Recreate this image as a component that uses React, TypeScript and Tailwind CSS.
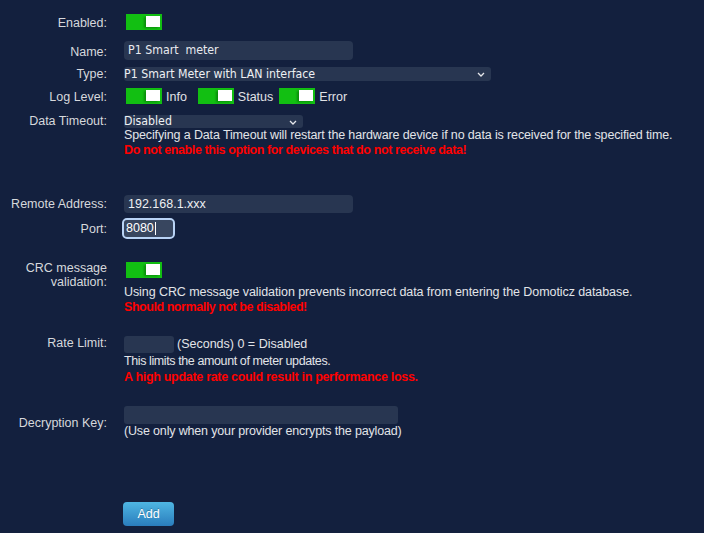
import React from 'react';

function Toggle({ className }: { className?: string }) {
  return (
    <div className={`relative h-4 w-9 bg-[#12bf12] ${className ?? ''}`}>
      <div className="absolute right-[2px] top-[2px] h-[11px] w-[14px] bg-white shadow-[-2px_1px_2px_rgba(0,80,0,0.45)]" />
    </div>
  );
}

function Chevron() {
  return (
    <svg width="8" height="5" viewBox="0 0 8 5" className="absolute right-[6px] top-[5px]">
      <path d="M1 1 L4 4 L7 1" fill="none" stroke="#e5e7eb" strokeWidth="1.3" />
    </svg>
  );
}

function Label({ children, className }: { children: React.ReactNode; className?: string }) {
  return (
    <div className={`w-[107px] shrink-0 text-right text-[12.5px] leading-[14px] text-[#d6d8dc] ${className ?? ''}`}>
      {children}
    </div>
  );
}

const arial = { fontFamily: '"Liberation Sans", Arial, sans-serif' };
const tahoma = { fontFamily: '"DejaVu Sans Condensed", "DejaVu Sans", Verdana, sans-serif' };

export default function App() {
  return (
    <div className="min-h-[533px] w-full bg-[#13203e] pt-[14px] leading-[15px]" style={arial}>
      {/* Enabled */}
      <div className="flex h-4 items-center">
        <Label className="translate-y-px">Enabled:</Label>
        <Toggle className="ml-[19px]" />
      </div>

      {/* Name */}
      <div className="mt-[11px] flex h-[19px] items-center">
        <Label className="translate-y-px">Name:</Label>
        <div
          className="ml-[17px] flex h-[19px] w-[229px] items-center rounded-[4px] bg-[#283651] pl-[4px] text-[12.25px] whitespace-pre text-[#e8eaee]"
          style={tahoma}
        >
          P1 Smart  meter
        </div>
      </div>

      {/* Type */}
      <div className="mt-[7px] flex h-[14px] items-center">
        <Label>Type:</Label>
        <div
          className="relative ml-[17px] flex h-[14px] w-[367px] items-center rounded-[3px] bg-[#283651] text-[12.25px] text-[#eef0f3]"
          style={tahoma}
        >
          P1 Smart Meter with LAN interface
          <Chevron />
        </div>
      </div>

      {/* Log Level */}
      <div className="mt-[7px] flex h-4 items-center">
        <Label className="translate-y-px">Log Level:</Label>
        <div className="ml-[19px] flex items-center text-[12.5px] leading-[14px] text-[#e0e2e6]">
          <Toggle />
          <span className="ml-[4px] translate-y-px">Info</span>
          <Toggle className="ml-[11px]" />
          <span className="ml-[4px] translate-y-px">Status</span>
          <Toggle className="ml-[6px]" />
          <span className="ml-[4px] translate-y-px">Error</span>
        </div>
      </div>

      {/* Data Timeout */}
      <div className="mt-[11px] flex items-start">
        <Label className="-mt-px">Data Timeout:</Label>
        <div className="ml-[17px] flex flex-col">
          <div
            className="relative flex h-[13px] w-[179px] items-center rounded-[3px] bg-[#283651] text-[12.25px] text-[#eef0f3]"
            style={tahoma}
          >
            Disabled
            <Chevron />
          </div>
          <div className="text-[12.5px] leading-[15px] tracking-[-0.13px] text-[#e2e4e8]">
            Specifying a Data Timeout will restart the hardware device if no data is received for the specified time.
          </div>
          <div className="text-[12.5px] font-bold leading-[15px] tracking-[-0.4px] text-[#ff0000]">
            Do not enable this option for devices that do not receive data!
          </div>
        </div>
      </div>

      {/* Remote Address */}
      <div className="mt-[37px] flex h-[18px] items-center">
        <Label>Remote Address:</Label>
        <div className="ml-[17px] flex h-[18px] w-[229px] items-center rounded-[4px] bg-[#283651] pl-[4px] text-[12.5px] text-[#eef0f3]">
          192.168.1.xxx
        </div>
      </div>

      {/* Port */}
      <div className="mt-[7px] flex h-[17px] items-center">
        <Label>Port:</Label>
        <div className="ml-[17px] flex h-[17px] w-[49px] items-center rounded-[3px] bg-[#38465f] pl-[2px] text-[12.5px] text-white outline-2 outline-[#b9d3f5]">
          8080<span className="ml-[1px] h-[13px] w-px bg-white" />
        </div>
      </div>

      {/* CRC */}
      <div className="mt-[25px] flex items-start">
        <Label className="-mt-px">
          CRC message
          <br />
          validation:
        </Label>
        <div className="ml-[17px] flex flex-col">
          <Toggle className="ml-[2px]" />
          <div className="mt-[7px] text-[12.5px] leading-[15px] tracking-[-0.08px] text-[#e2e4e8]">
            Using CRC message validation prevents incorrect data from entering the Domoticz database.
          </div>
          <div className="text-[12.5px] font-bold leading-[15px] tracking-[-0.45px] text-[#ff0000]">
            Should normally not be disabled!
          </div>
        </div>
      </div>

      {/* Rate Limit */}
      <div className="mt-[21px] flex items-start">
        <Label>Rate Limit:</Label>
        <div className="ml-[17px] flex flex-col">
          <div className="flex h-[17px] items-center">
            <div className="h-[17px] w-[50px] rounded-[3px] bg-[#283651]" />
            <span className="ml-[3px] text-[12.5px] text-[#e2e4e8]">(Seconds) 0 = Disabled</span>
          </div>
          <div className="text-[12.5px] leading-[16px] tracking-[-0.4px] text-[#e2e4e8]">
            This limits the amount of meter updates.
          </div>
          <div className="text-[12.5px] font-bold leading-[16px] tracking-[-0.3px] text-[#ff0000]">
            A high update rate could result in performance loss.
          </div>
        </div>
      </div>

      {/* Decryption Key */}
      <div className="mt-[21px] flex items-start">
        <Label className="pt-[10px]">Decryption Key:</Label>
        <div className="ml-[17px] flex flex-col">
          <div className="h-[18px] w-[274px] rounded-[3px] bg-[#283651]" />
          <div className="text-[12.5px] leading-[15px] tracking-[-0.16px] text-[#e2e4e8]">
            (Use only when your provider encrypts the payload)
          </div>
        </div>
      </div>

      {/* Add */}
      <div className="mt-[63px] flex pb-[7px]">
        <button className="ml-[123px] h-6 w-[51px] rounded-[4px] bg-gradient-to-b from-[#4fb6e2] to-[#2a7dbd] text-[12.5px] text-white [text-shadow:0_-1px_0_rgba(0,0,0,0.25)]">
          Add
        </button>
      </div>
    </div>
  );
}
